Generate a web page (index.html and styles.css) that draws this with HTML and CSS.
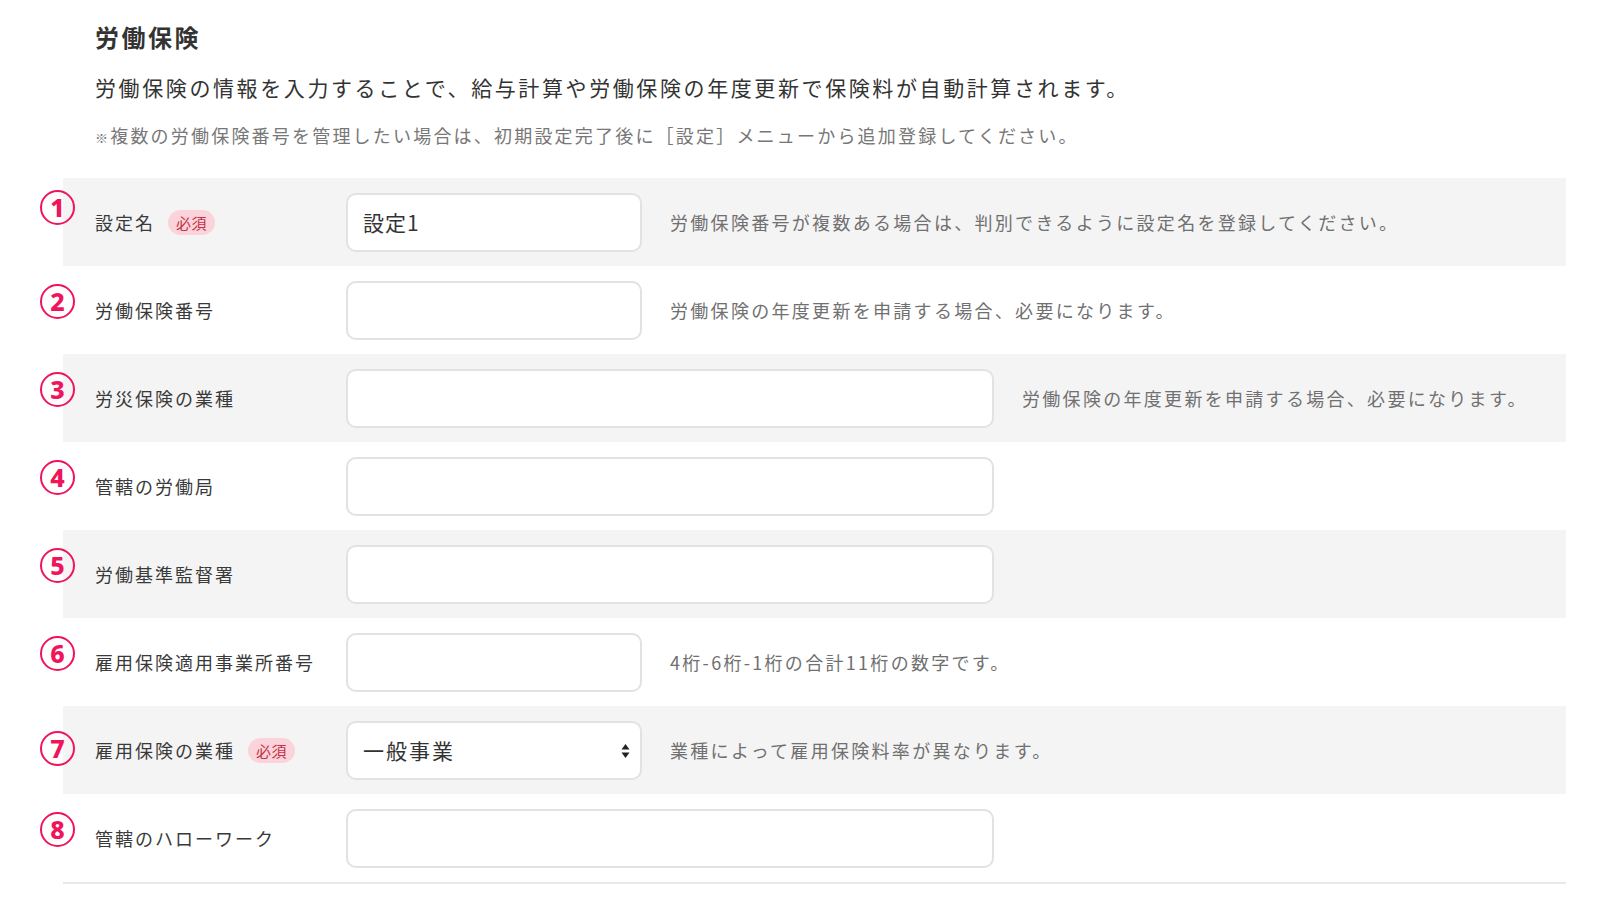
FILE: index.html
```html
<!DOCTYPE html>
<html lang="ja">
<head>
    <meta charset="UTF-8">
    <meta name="viewport" content="width=device-width, initial-scale=1.0">
    <title>労働保険</title>
    <link rel="stylesheet" href="styles.css">
</head>
<body>
    <section class="page">
        <div class="intro">
            <h1>労働保険</h1>
            <p class="lead">労働保険の情報を入力することで、給与計算や労働保険の年度更新で保険料が自動計算されます。</p>
            <p class="note"><span class="mark">※</span>複数の労働保険番号を管理したい場合は、初期設定完了後に［設定］メニューから追加登録してください。</p>
        </div>

        <form class="rows">
            <div class="row shaded">
                <span class="marker marker-high">1</span>
                <label class="label" for="name">設定名<span class="badge">必須</span></label>
                <input class="field short" type="text" id="name" value="設定1">
                <span class="help">労働保険番号が複数ある場合は、判別できるように設定名を登録してください。</span>
            </div>
            <div class="row">
                <span class="marker">2</span>
                <label class="label" for="number">労働保険番号</label>
                <input class="field short" type="text" id="number">
                <span class="help">労働保険の年度更新を申請する場合、必要になります。</span>
            </div>
            <div class="row shaded">
                <span class="marker">3</span>
                <label class="label" for="industry">労災保険の業種</label>
                <input class="field long" type="text" id="industry">
                <span class="help">労働保険の年度更新を申請する場合、必要になります。</span>
            </div>
            <div class="row">
                <span class="marker">4</span>
                <label class="label" for="bureau">管轄の労働局</label>
                <input class="field long" type="text" id="bureau">
            </div>
            <div class="row shaded">
                <span class="marker">5</span>
                <label class="label" for="office">労働基準監督署</label>
                <input class="field long" type="text" id="office">
            </div>
            <div class="row">
                <span class="marker">6</span>
                <label class="label" for="emp-number">雇用保険適用事業所番号</label>
                <input class="field short" type="text" id="emp-number">
                <span class="help">4桁-6桁-1桁の合計11桁の数字です。</span>
            </div>
            <div class="row shaded">
                <span class="marker marker-low">7</span>
                <label class="label" for="emp-type">雇用保険の業種<span class="badge">必須</span></label>
                <div class="select-wrap">
                    <select class="field short select" id="emp-type">
                        <option>一般事業</option>
                        <option>農林水産・清酒製造の事業</option>
                        <option>建設の事業</option>
                    </select>
                    <svg class="select-arrow" width="9" height="16" viewBox="0 0 9 16">
                        <path d="M4.5 1 L8.5 6.5 H0.5 Z" fill="#222"/>
                        <path d="M4.5 15 L8.5 9.5 H0.5 Z" fill="#222"/>
                    </svg>
                </div>
                <span class="help">業種によって雇用保険料率が異なります。</span>
            </div>
            <div class="row">
                <span class="marker">8</span>
                <label class="label" for="hellowork">管轄のハローワーク</label>
                <input class="field long" type="text" id="hellowork">
            </div>
        </form>
    </section>
</body>
</html>
```

FILE: styles.css
```css
body {
    margin: 0;
    font-family: "Noto Sans CJK JP", "Noto Sans", sans-serif;
    color: #333;
    background: #fff;
}
.page {
    padding: 0 34px 0 63px;
}
.intro {
    padding-left: 32px;
}
h1 {
    margin: 0;
    padding-top: 19px;
    font-size: 24px;
    line-height: 36px;
    font-weight: bold;
    letter-spacing: 2.5px;
    color: #333;
}
.lead {
    margin: 16px 0 0;
    font-size: 21px;
    line-height: 32px;
    letter-spacing: 2.6px;
    color: #333;
}
.note {
    margin: 18px 0 0;
    font-size: 18px;
    line-height: 28px;
    letter-spacing: 2.2px;
    color: #777;
}
.note .mark {
    font-size: 13px;
}
.rows {
    margin-top: 26px;
    border-bottom: 2px solid #e8e8e8;
}
.row {
    position: relative;
    display: flex;
    align-items: center;
    height: 88px;
    padding-left: 32px;
}
.shaded {
    background: #f5f4f5;
}
.label {
    display: flex;
    align-items: center;
    width: 251px;
    flex-shrink: 0;
    font-size: 18px;
    letter-spacing: 2px;
    color: #3a3a3a;
}
.badge {
    margin-left: 13px;
    padding: 0 8px;
    height: 25px;
    line-height: 25px;
    border-radius: 13px;
    background: #fbd3da;
    color: #c43246;
    font-size: 15px;
    letter-spacing: 0.5px;
}
.field {
    box-sizing: border-box;
    height: 59px;
    padding: 0 15px;
    border: 2px solid #e2e2e2;
    border-radius: 10px;
    background: #fff;
    font-family: inherit;
    font-size: 21px;
    letter-spacing: 1px;
    color: #333;
    outline: none;
}
.short {
    width: 296px;
}
.long {
    width: 648px;
}
.help {
    margin-left: 28px;
    font-size: 18px;
    letter-spacing: 2.3px;
    color: #707070;
}
.select-wrap {
    position: relative;
    display: flex;
}
.select {
    appearance: none;
    -webkit-appearance: none;
    letter-spacing: 2px;
}
.select-arrow {
    position: absolute;
    right: 12px;
    top: 22px;
    pointer-events: none;
}
.marker {
    position: absolute;
    left: -23px;
    top: 18px;
    box-sizing: border-box;
    width: 35px;
    height: 35px;
    border: 2px solid #f0145a;
    border-radius: 50%;
    display: flex;
    align-items: center;
    justify-content: center;
    font-family: "Noto Sans", sans-serif;
    font-size: 25px;
    font-weight: 800;
    line-height: 1;
    color: #f0145a;
}
.marker-high {
    top: 12px;
}
.marker-low {
    top: 25px;
}
```
